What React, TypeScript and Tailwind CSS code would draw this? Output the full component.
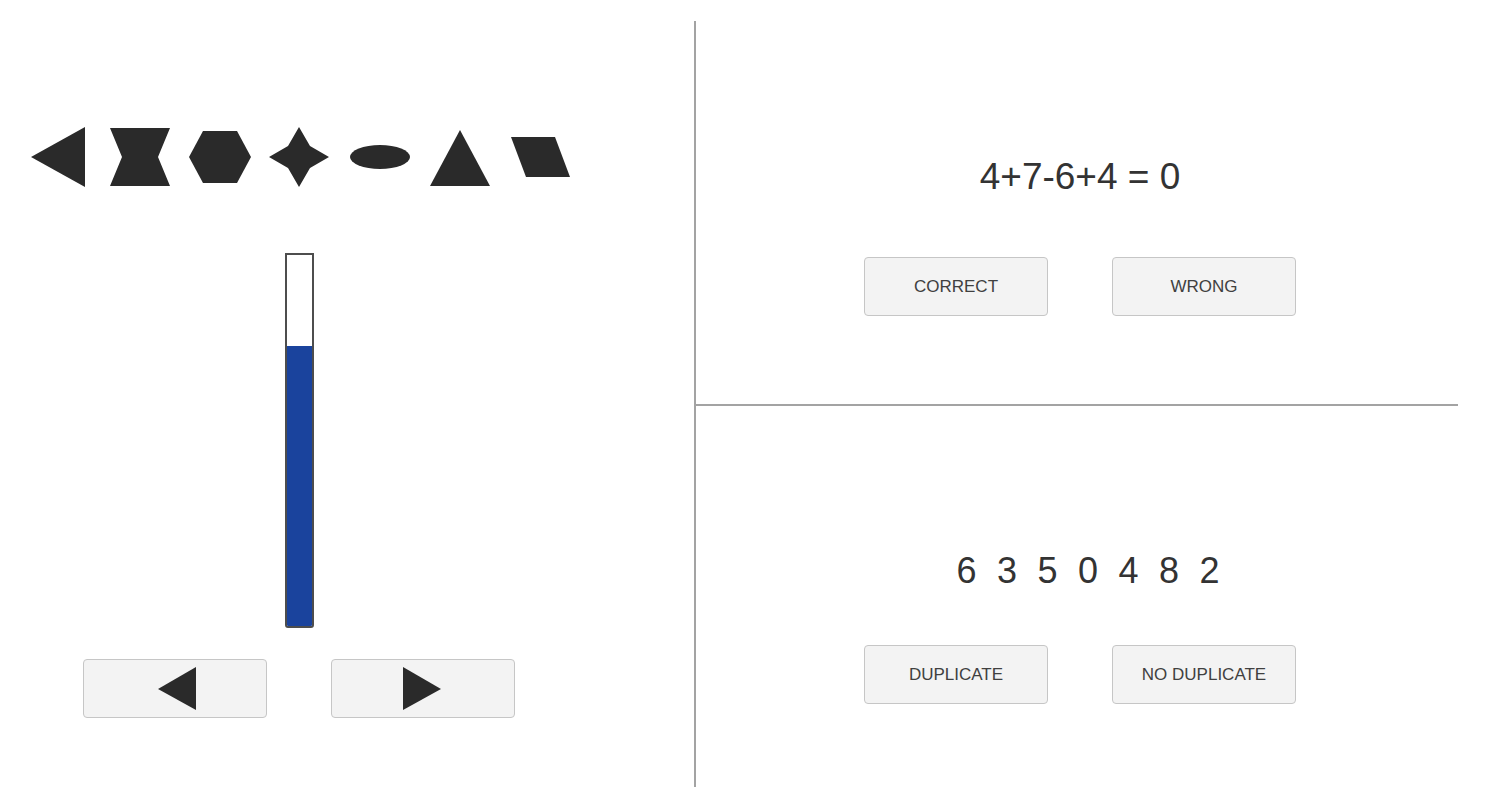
import React from 'react';

const ink = '#2a2a2a';

function Shape({ children }: { children: React.ReactNode }) {
  return (
    <svg width="60" height="60" viewBox="0 0 60 60" className="overflow-visible shrink-0">
      {children}
    </svg>
  );
}

function ShapesRow() {
  return (
    <div className="flex items-center gap-[20px] ml-[30px]">
      <Shape>
        <polygon points="1,30 55,0 55,60" fill={ink} />
      </Shape>
      <Shape>
        <polygon points="0,1 60,1 48,30 60,59 0,59 12,30" fill={ink} />
      </Shape>
      <Shape>
        <polygon points="-1,30 13,4 47,4 61,30 47,56 13,56" fill={ink} />
      </Shape>
      <Shape>
        <polygon points="29,0 40,19 59,30 40,41 29,60 18,41 -1,30 18,19" fill={ink} />
      </Shape>
      <Shape>
        <ellipse cx="30" cy="30" rx="30" ry="12" fill={ink} />
      </Shape>
      <Shape>
        <polygon points="30,3 60,59 0,59" fill={ink} />
      </Shape>
      <Shape>
        <polygon points="1,10 45,10 60,50 16,50" fill={ink} />
      </Shape>
    </div>
  );
}

function GameButton({ children }: { children: React.ReactNode }) {
  return (
    <button className="w-[184px] h-[59px] bg-[#f3f3f3] border border-[#c6c6c6] rounded-[4px] flex items-center justify-center text-[17px] text-[#404040] font-['Liberation_Sans',Arial,sans-serif]">
      {children}
    </button>
  );
}

export default function App() {
  const level = 0.755;
  const digits = [6, 3, 5, 0, 4, 8, 2];

  return (
    <div className="w-[1506px] h-[802px] bg-white flex font-['Liberation_Sans',Arial,sans-serif] text-[#333]">
      {/* Left: shapes + level bar */}
      <div className="w-[694px] shrink-0 pt-[127px]">
        <ShapesRow />

        <div className="flex justify-center w-[598px] mt-[66px]">
          <div className="w-[29px] h-[375px] border-2 border-[#4d4d4d] rounded-b-[3px] bg-white flex flex-col justify-end overflow-hidden">
            <div className="bg-[#1a439d] w-full" style={{ height: `${level * 100}%` }} />
          </div>
        </div>

        <div className="flex justify-center gap-[64px] w-[598px] mt-[31px]">
          <GameButton>
            <svg width="40" height="44" viewBox="0 0 40 44" className="ml-[3px]">
              <polygon points="1,22 39,0 39,43" fill={ink} />
            </svg>
          </GameButton>
          <GameButton>
            <svg width="40" height="44" viewBox="0 0 40 44" className="-ml-[2px]">
              <polygon points="1,0 39,22 1,43" fill={ink} />
            </svg>
          </GameButton>
        </div>
      </div>

      {/* Divider */}
      <div className="w-[2px] h-[766px] mt-[21px] bg-[#a3a3a3] shrink-0" />

      {/* Right: tasks */}
      <div className="w-[768px] shrink-0 mt-[21px] flex flex-col">
        <div className="h-[383px] flex flex-col items-center pt-[136px]">
          <div className="text-[37px] leading-[40px] text-[#333]">4+7-6+4 = 0</div>
          <div className="flex gap-[64px] mt-[60px]">
            <GameButton>CORRECT</GameButton>
            <GameButton>WRONG</GameButton>
          </div>
        </div>

        <div className="w-[762px] h-[2px] bg-[#a3a3a3]" />

        <div className="flex-1 flex flex-col items-center pt-[145px]">
          <div className="flex gap-[20.5px] text-[36px] leading-[40px] text-[#333] ml-[16px]">
            {digits.map((d, i) => (
              <span key={i}>{d}</span>
            ))}
          </div>
          <div className="flex gap-[64px] mt-[54px]">
            <GameButton>DUPLICATE</GameButton>
            <GameButton>NO DUPLICATE</GameButton>
          </div>
        </div>
      </div>
    </div>
  );
}
